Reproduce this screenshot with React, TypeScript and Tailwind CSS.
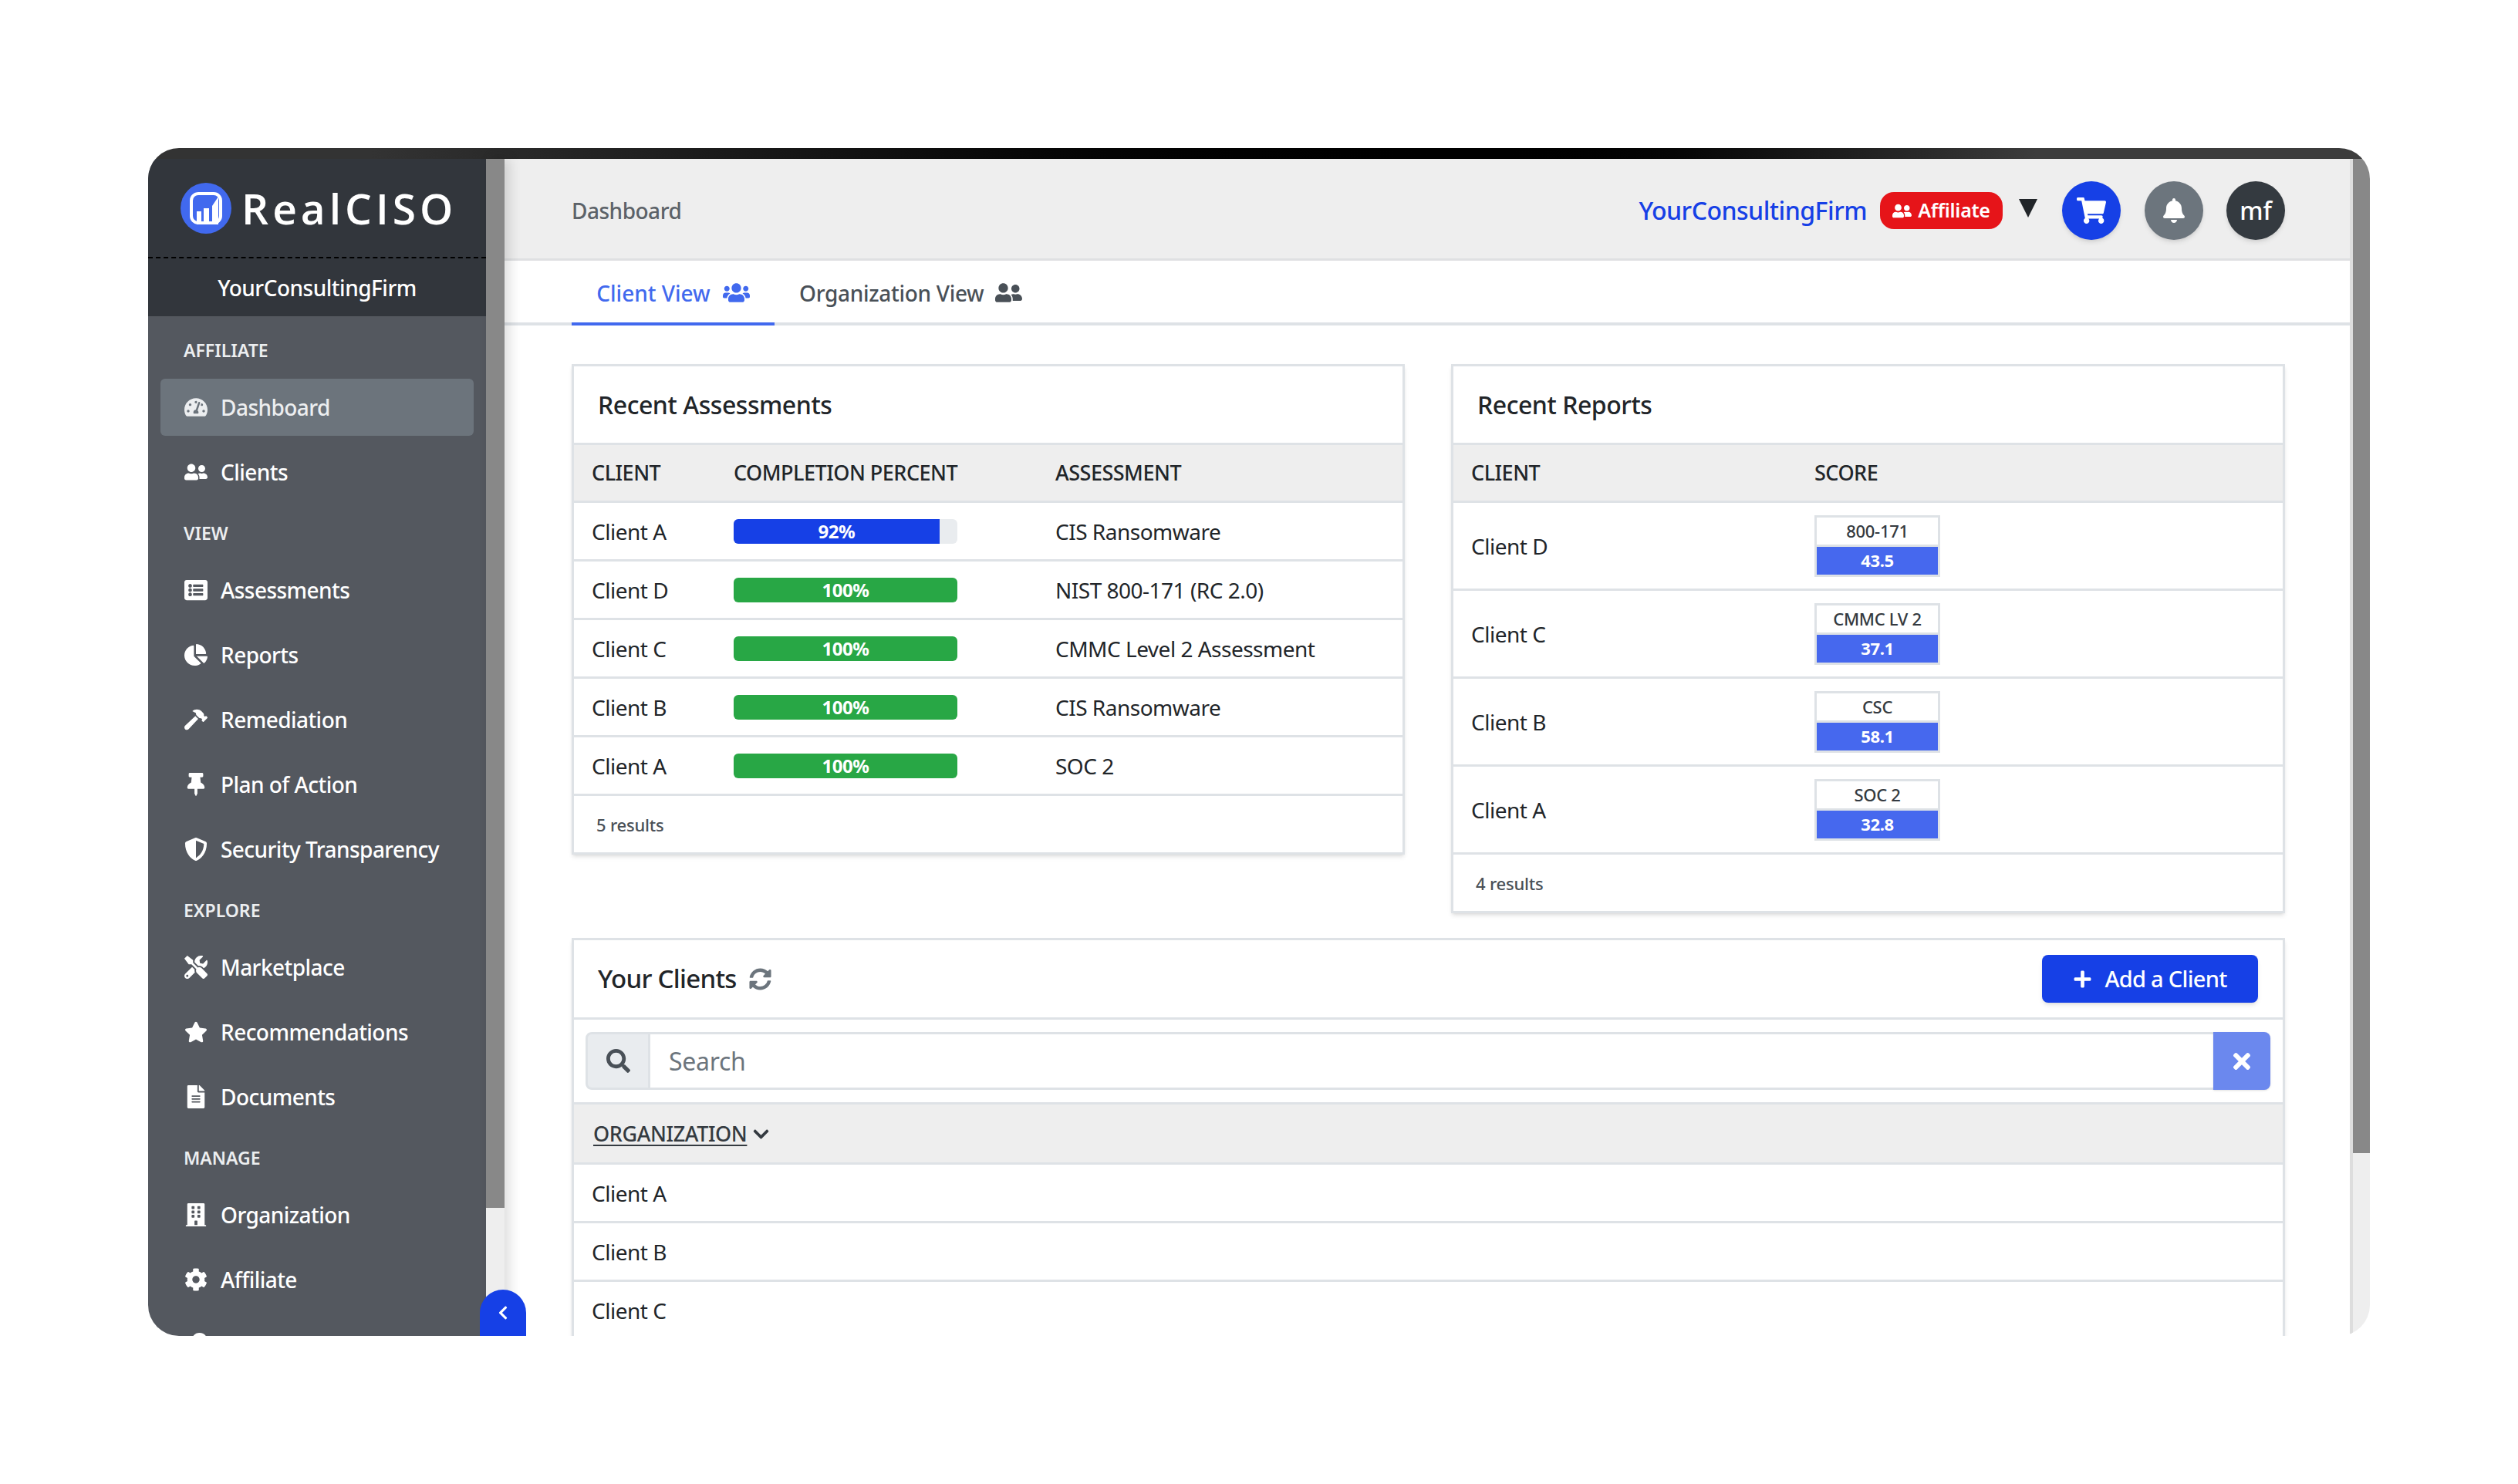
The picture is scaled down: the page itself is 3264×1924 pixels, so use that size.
import {
  FaBell,
  FaBuilding,
  FaChartPie,
  FaChevronDown,
  FaChevronLeft,
  FaCog,
  FaFileAlt,
  FaHammer,
  FaKey,
  FaListAlt,
  FaPlus,
  FaSearch,
  FaShieldAlt,
  FaShoppingCart,
  FaStar,
  FaSyncAlt,
  FaTachometerAlt,
  FaThumbtack,
  FaTimes,
  FaTools,
  FaUserFriends,
  FaUsers,
} from "react-icons/fa";
import type { IconType } from "react-icons";

type NavGroup = {
  label: string;
  items: { name: string; icon: IconType; active?: boolean }[];
};

const navGroups: NavGroup[] = [
  {
    label: "AFFILIATE",
    items: [
      { name: "Dashboard", icon: FaTachometerAlt, active: true },
      { name: "Clients", icon: FaUserFriends },
    ],
  },
  {
    label: "VIEW",
    items: [
      { name: "Assessments", icon: FaListAlt },
      { name: "Reports", icon: FaChartPie },
      { name: "Remediation", icon: FaHammer },
      { name: "Plan of Action", icon: FaThumbtack },
      { name: "Security Transparency", icon: FaShieldAlt },
    ],
  },
  {
    label: "EXPLORE",
    items: [
      { name: "Marketplace", icon: FaTools },
      { name: "Recommendations", icon: FaStar },
      { name: "Documents", icon: FaFileAlt },
    ],
  },
  {
    label: "MANAGE",
    items: [
      { name: "Organization", icon: FaBuilding },
      { name: "Affiliate", icon: FaCog },
      { name: "Billing", icon: FaKey },
    ],
  },
];

const assessments = [
  { client: "Client A", percent: 92, name: "CIS Ransomware" },
  { client: "Client D", percent: 100, name: "NIST 800-171 (RC 2.0)" },
  { client: "Client C", percent: 100, name: "CMMC Level 2 Assessment" },
  { client: "Client B", percent: 100, name: "CIS Ransomware" },
  { client: "Client A", percent: 100, name: "SOC 2" },
];

const reports = [
  { client: "Client D", label: "800-171", score: "43.5" },
  { client: "Client C", label: "CMMC LV 2", score: "37.1" },
  { client: "Client B", label: "CSC", score: "58.1" },
  { client: "Client A", label: "SOC 2", score: "32.8" },
];

function Logo() {
  return (
    <svg width="66" height="66" viewBox="0 0 66 66" className="shrink-0">
      <circle cx="33" cy="33" r="33" fill="#4169ee" />
      <rect x="14" y="14" width="38" height="38" rx="9" fill="none" stroke="#fff" strokeWidth="4" />
      <path d="M21 37h6v17h-6zM30 33h7v21h-7zM41 30l8-12v36h-8z" fill="#fff" />
    </svg>
  );
}

function Sidebar() {
  return (
    <aside className="flex h-full w-[438px] shrink-0 flex-col overflow-hidden bg-[#54585f]">
      <div className="flex h-[129px] shrink-0 items-center gap-[13px] border-b-2 border-dashed border-black bg-[#32363c] pl-[42px]">
        <Logo />
        <span className="text-[55px] leading-none font-semibold tracking-[5px] text-white [font-family:'Open_Sans',sans-serif]">
          RealCISO
        </span>
      </div>
      <div className="flex h-[75px] shrink-0 items-center justify-center bg-[#32363c] text-[28px] font-medium tracking-[-0.5px] text-white">
        YourConsultingFirm
      </div>
      <nav className="flex flex-col px-4 pt-[12px]">
        {navGroups.map((group) => (
          <div key={group.label} className="flex flex-col">
            <div className="flex h-[69px] items-center pb-[4px] pl-[30px] text-[23px] font-semibold text-[#eceef0]">
              {group.label}
            </div>
            {group.items.map((item) => (
              <div
                key={item.name}
                className={
                  item.active
                    ? "mb-[10px] flex h-[74px] shrink-0 items-center rounded-md bg-[#6c747c] pl-[30px] text-[28px] font-medium tracking-[-0.55px] text-[#eceef0]"
                    : "mb-[10px] flex h-[74px] shrink-0 items-center rounded-md pl-[30px] text-[28px] font-medium tracking-[-0.55px] text-white"
                }
              >
                <span className="flex w-[32px] justify-center">
                  <item.icon size={30} />
                </span>
                <span className="ml-[16px]">{item.name}</span>
              </div>
            ))}
          </div>
        ))}
      </nav>
    </aside>
  );
}

function Header() {
  return (
    <header className="flex h-[132px] shrink-0 items-center justify-between border-b-[3px] border-[#dfe0e2] bg-[#eeeeee] pt-[5px] pr-[84px] pl-[87px]">
      <span className="text-[28px] font-medium tracking-[-0.5px] text-[#5c6268]">Dashboard</span>
      <div className="flex items-center">
        <span className="text-[32px] font-medium tracking-[-0.5px] text-[#1640e6]">YourConsultingFirm</span>
        <span className="ml-[17px] flex h-[48px] w-[159px] items-center justify-center gap-[8px] rounded-[18px] bg-[#e61419] text-[25px] font-semibold tracking-[-0.3px] text-white">
          <FaUserFriends size={25} />
          Affiliate
        </span>
        <svg width="24" height="24" viewBox="0 0 24 24" className="mr-[32px] mb-[6px] ml-[21px]">
          <path d="M0 0h24L12 24z" fill="#212529" />
        </svg>
        <button className="flex h-[76px] w-[76px] items-center justify-center rounded-full bg-[#1640e6] text-white shadow-md">
          <FaShoppingCart size={38} />
        </button>
        <button className="ml-[31px] flex h-[76px] w-[76px] items-center justify-center rounded-full bg-[#6c757d] text-white shadow-md">
          <FaBell size={32} />
        </button>
        <button className="ml-[30px] flex h-[76px] w-[76px] items-center justify-center rounded-full bg-[#343a40] text-[32px] font-medium text-white shadow-md">
          mf
        </button>
      </div>
    </header>
  );
}

function Tabs() {
  return (
    <div className="flex h-[84px] shrink-0 border-b-4 border-[#dee2e6] pl-[87px] text-[28px] font-medium">
      <div className="-mb-[4px] flex w-[263px] items-center justify-center gap-[16px] border-b-4 border-[#4169ee] pt-[3px] text-[#4169ee]">
        Client View
        <FaUsers size={35} />
      </div>
      <div className="ml-[32px] flex items-center gap-[15px] pt-[3px] tracking-[-0.3px] text-[#495057]">
        Organization View
        <FaUserFriends size={35} />
      </div>
    </div>
  );
}

function CardTitle({ title }: { title: string }) {
  return (
    <div className="flex h-[102px] items-center border-b-[3px] border-[#dee2e6] pl-[31px] text-[32px] font-medium tracking-[-0.45px] text-[#212529]">
      {title}
    </div>
  );
}

function RecentAssessments() {
  return (
    <div className="w-[1080px] self-start border-[3px] border-[#dee2e6] bg-white shadow-md">
      <CardTitle title="Recent Assessments" />
      <div className="flex h-[75px] items-center border-b-[3px] border-[#dee2e6] bg-[#eeeeee] pl-[23px] text-[27px] font-medium tracking-[-0.5px] text-[#212529]">
        <span className="w-[184px]">CLIENT</span>
        <span className="w-[417px]">COMPLETION PERCENT</span>
        <span>ASSESSMENT</span>
      </div>
      {assessments.map((row, i) => (
        <div
          key={i}
          className="flex h-[76px] items-center border-b-[3px] border-[#dee2e6] pl-[23px] text-[28px] tracking-[-0.5px] text-[#212529]"
        >
          <span className="w-[184px]">{row.client}</span>
          <div className="w-[417px]">
            <div className="h-[32px] w-[290px] overflow-hidden rounded-md bg-[#e9ecef]">
              <div
                className={
                  row.percent === 100
                    ? "flex h-full items-center justify-center bg-[#28a745] text-[24px] font-bold text-white"
                    : "flex h-full items-center justify-center bg-[#1640e6] text-[24px] font-bold text-white"
                }
                style={{ width: `${row.percent}%` }}
              >
                {row.percent}%
              </div>
            </div>
          </div>
          <span>{row.name}</span>
        </div>
      ))}
      <div className="flex h-[73px] items-center pt-[2px] pl-[29px] text-[22px] font-medium tracking-[-0.2px] text-[#495057]">
        5 results
      </div>
    </div>
  );
}

function RecentReports() {
  return (
    <div className="w-[1081px] self-start border-[3px] border-[#dee2e6] bg-white shadow-md">
      <CardTitle title="Recent Reports" />
      <div className="flex h-[75px] items-center border-b-[3px] border-[#dee2e6] bg-[#eeeeee] pl-[23px] text-[27px] font-medium tracking-[-0.5px] text-[#212529]">
        <span className="w-[445px]">CLIENT</span>
        <span>SCORE</span>
      </div>
      {reports.map((row) => (
        <div
          key={row.client}
          className="flex h-[114px] items-center border-b-[3px] border-[#dee2e6] pl-[23px] text-[28px] tracking-[-0.5px] text-[#212529]"
        >
          <span className="w-[445px]">{row.client}</span>
          <div className="flex h-[80px] w-[163px] flex-col border-[3px] border-[#dee2e6] text-center text-[22px] tracking-[-0.3px]">
            <div className="flex flex-1 items-center justify-center border-b-[3px] border-[#dee2e6] font-medium text-[#343a40]">
              {row.label}
            </div>
            <div className="flex flex-1 items-center justify-center bg-[#4668ee] font-bold text-white">
              {row.score}
            </div>
          </div>
        </div>
      ))}
      <div className="flex h-[73px] items-center pt-[2px] pl-[29px] text-[22px] font-medium tracking-[-0.2px] text-[#495057]">
        4 results
      </div>
    </div>
  );
}

function YourClients() {
  return (
    <div className="border-[3px] border-b-0 border-[#dee2e6] bg-white shadow-md">
      <div className="flex h-[103px] items-center justify-between border-b-[3px] border-[#dee2e6] pr-[32px] pl-[31px]">
        <div className="flex items-center gap-[16px] text-[33px] font-medium tracking-[-0.7px] text-[#212529]">
          Your Clients
          <FaSyncAlt size={29} className="text-[#6c757d]" />
        </div>
        <button className="flex h-[62px] w-[280px] items-center justify-center gap-[16px] rounded-lg bg-[#1640e6] text-[29px] font-medium tracking-[-0.7px] text-white shadow-md">
          <FaPlus size={25} />
          Add a Client
        </button>
      </div>
      <div className="flex h-[110px] items-center border-b-[3px] border-[#dee2e6] pr-[16px] pl-[15px]">
        <div className="flex h-[75px] w-full">
          <div className="flex w-[84px] items-center justify-center rounded-l-lg border-[3px] border-[#dee2e6] bg-[#e9ecef] text-[#495057]">
            <FaSearch size={31} />
          </div>
          <div className="flex flex-1 items-center border-y-[3px] border-[#dee2e6] pl-[24px] text-[32px] tracking-[-0.3px] text-[#6c757d]">
            Search
          </div>
          <button className="flex w-[74px] items-center justify-center rounded-r-lg bg-[#6b88ee] text-white shadow-sm">
            <FaTimes size={32} />
          </button>
        </div>
      </div>
      <div className="flex h-[78px] items-center gap-[7px] border-b-[3px] border-[#dee2e6] bg-[#eeeeee] pt-[1px] pl-[25px] text-[27px] font-medium tracking-[-0.4px] text-[#343a40]">
        <span className="underline underline-offset-4">ORGANIZATION</span>
        <FaChevronDown size={23} />
      </div>
      {["Client A", "Client B", "Client C"].map((name) => (
        <div
          key={name}
          className="flex h-[76px] shrink-0 items-center border-b-[3px] border-[#dee2e6] pl-[23px] text-[28px] tracking-[-0.5px] text-[#212529]"
        >
          {name}
        </div>
      ))}
    </div>
  );
}

export default function App() {
  return (
    <div className="h-[1924px] w-[3264px] bg-white pt-[192px] pl-[192px] font-['Noto_Sans',sans-serif]">
      <div className="relative flex h-[1540px] w-[2880px] flex-col overflow-hidden rounded-[40px]">
        <div className="h-[14px] shrink-0 bg-linear-to-r from-[#333333] from-10% via-black via-60% to-[#3c3c3c] to-85%" />
        <div className="flex min-h-0 flex-1">
          <Sidebar />
          <div className="relative z-10 flex h-full w-[24px] shrink-0 flex-col bg-[#eeeeee] shadow-[6px_0_16px_rgba(0,0,0,0.14)]">
            <div className="h-[1360px] bg-[#888888]" />
          </div>
          <main className="flex min-w-0 flex-1 flex-col overflow-hidden bg-white">
            <Header />
            <Tabs />
            <div className="flex flex-col gap-[33px] pt-[50px] pr-[84px] pl-[87px]">
              <div className="flex h-[711px] justify-between">
                <RecentAssessments />
                <RecentReports />
              </div>
              <YourClients />
            </div>
          </main>
          <div className="flex h-full w-[26px] shrink-0 flex-col border-l-4 border-[#dddddd] bg-[#eeeeee]">
            <div className="h-[1289px] bg-[#888888]" />
          </div>
        </div>
        <button className="absolute bottom-0 left-[430px] z-20 flex h-[60px] w-[60px] items-center justify-center rounded-t-[30px] bg-[#1640e6] text-white">
          <FaChevronLeft size={20} />
        </button>
      </div>
    </div>
  );
}
